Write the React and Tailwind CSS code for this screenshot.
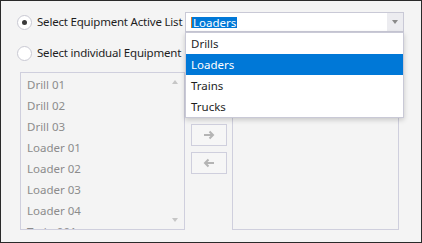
import React from "react";

const leftItems = [
  "Drill 01",
  "Drill 02",
  "Drill 03",
  "Loader 01",
  "Loader 02",
  "Loader 03",
  "Loader 04",
  "Train 001",
];

const options = ["Drills", "Loaders", "Trains", "Trucks"];

const Radio = ({ checked }) => (
  <span className="flex h-[15px] w-[15px] shrink-0 items-center justify-center rounded-full border border-[#c9c9d3] bg-white">
    {checked && <span className="h-[5px] w-[5px] rounded-full bg-[#3a3a3a]" />}
  </span>
);

const Arrow = ({ left }) => (
  <svg width="12" height="10" viewBox="0 0 12 10">
    <path
      d={left ? "M11 5H2M5.5 1.5 2 5l3.5 3.5" : "M1 5h9M6.5 1.5 10 5 6.5 8.5"}
      fill="none"
      stroke="#b4b4b4"
      strokeWidth="2"
    />
  </svg>
);

const App = () => {
  return (
    <div className="relative h-[243px] w-[422px] overflow-hidden border border-[#2a2a2a] bg-[#f4f4f4] whitespace-nowrap text-[11.5px] leading-[16px] font-['Noto_Sans',sans-serif] text-[#1e1e1e]">
      <div className="flex items-center pt-[11px] pl-[16px]">
        <div className="flex w-[168px] items-center gap-[5px]">
          <Radio checked />
          <span className="tracking-[-0.2px]">Select Equipment Active List</span>
        </div>
        <div className="flex h-[20px] w-[219px] items-stretch border border-[#c9c9d6] bg-white">
          <div className="flex flex-1 items-center pl-[5px]">
            <span className="h-[11px] w-px bg-[#e07a1f]" />
            <span className="bg-[#0078d7] px-px leading-[11px] text-white">Loaders</span>
          </div>
          <div className="flex w-[16px] items-center justify-center bg-[#ececf0]">
            <span className="h-0 w-0 border-x-[3.5px] border-t-[4px] border-x-transparent border-t-[#8a8a8a]" />
          </div>
        </div>
      </div>

      <div className="mt-[13px] flex items-center gap-[5px] pl-[16px]">
        <Radio />
        <span className="tracking-[-0.2px]">Select individual Equipment</span>
      </div>

      <div className="mt-[11px] flex pl-[19px]">
        <div className="relative h-[158px] w-[165px] overflow-hidden border border-[#cfcfdd]">
          <ul className="pt-px">
            {leftItems.map((item) => (
              <li key={item} className="flex h-[21px] items-center pl-[6px] text-[#8c8c8c]">
                {item}
              </li>
            ))}
          </ul>
          <span className="absolute right-[6px] top-[7px] h-0 w-0 border-x-[3.5px] border-b-[4px] border-x-transparent border-b-[#c6c6c6]" />
          <span className="absolute right-[6px] bottom-[7px] h-0 w-0 border-x-[3.5px] border-t-[4px] border-x-transparent border-t-[#c6c6c6]" />
        </div>

        <div className="ml-[6px] flex flex-col gap-[6px] pt-[52px]">
          <button className="flex h-[22px] w-[36px] items-center justify-center border border-[#cfcfdd] bg-[#f6f6f6]">
            <Arrow />
          </button>
          <button className="flex h-[22px] w-[36px] items-center justify-center border border-[#cfcfdd] bg-[#f6f6f6]">
            <Arrow left />
          </button>
        </div>

        <div className="ml-[5px] h-[158px] w-[167px] border border-[#cfcfdd]" />
      </div>

      <ul className="absolute left-[184px] top-[31px] w-[219px] border border-[#c9c9d6] bg-white shadow-[0_2px_5px_rgba(0,0,0,0.18)]">
        {options.map((o) => (
          <li
            key={o}
            className={
              o === "Loaders"
                ? "flex h-[21px] items-center bg-[#0078d7] pl-[5px] text-white"
                : "flex h-[21px] items-center pl-[5px]"
            }
          >
            {o}
          </li>
        ))}
      </ul>
    </div>
  );
};

export default App;
